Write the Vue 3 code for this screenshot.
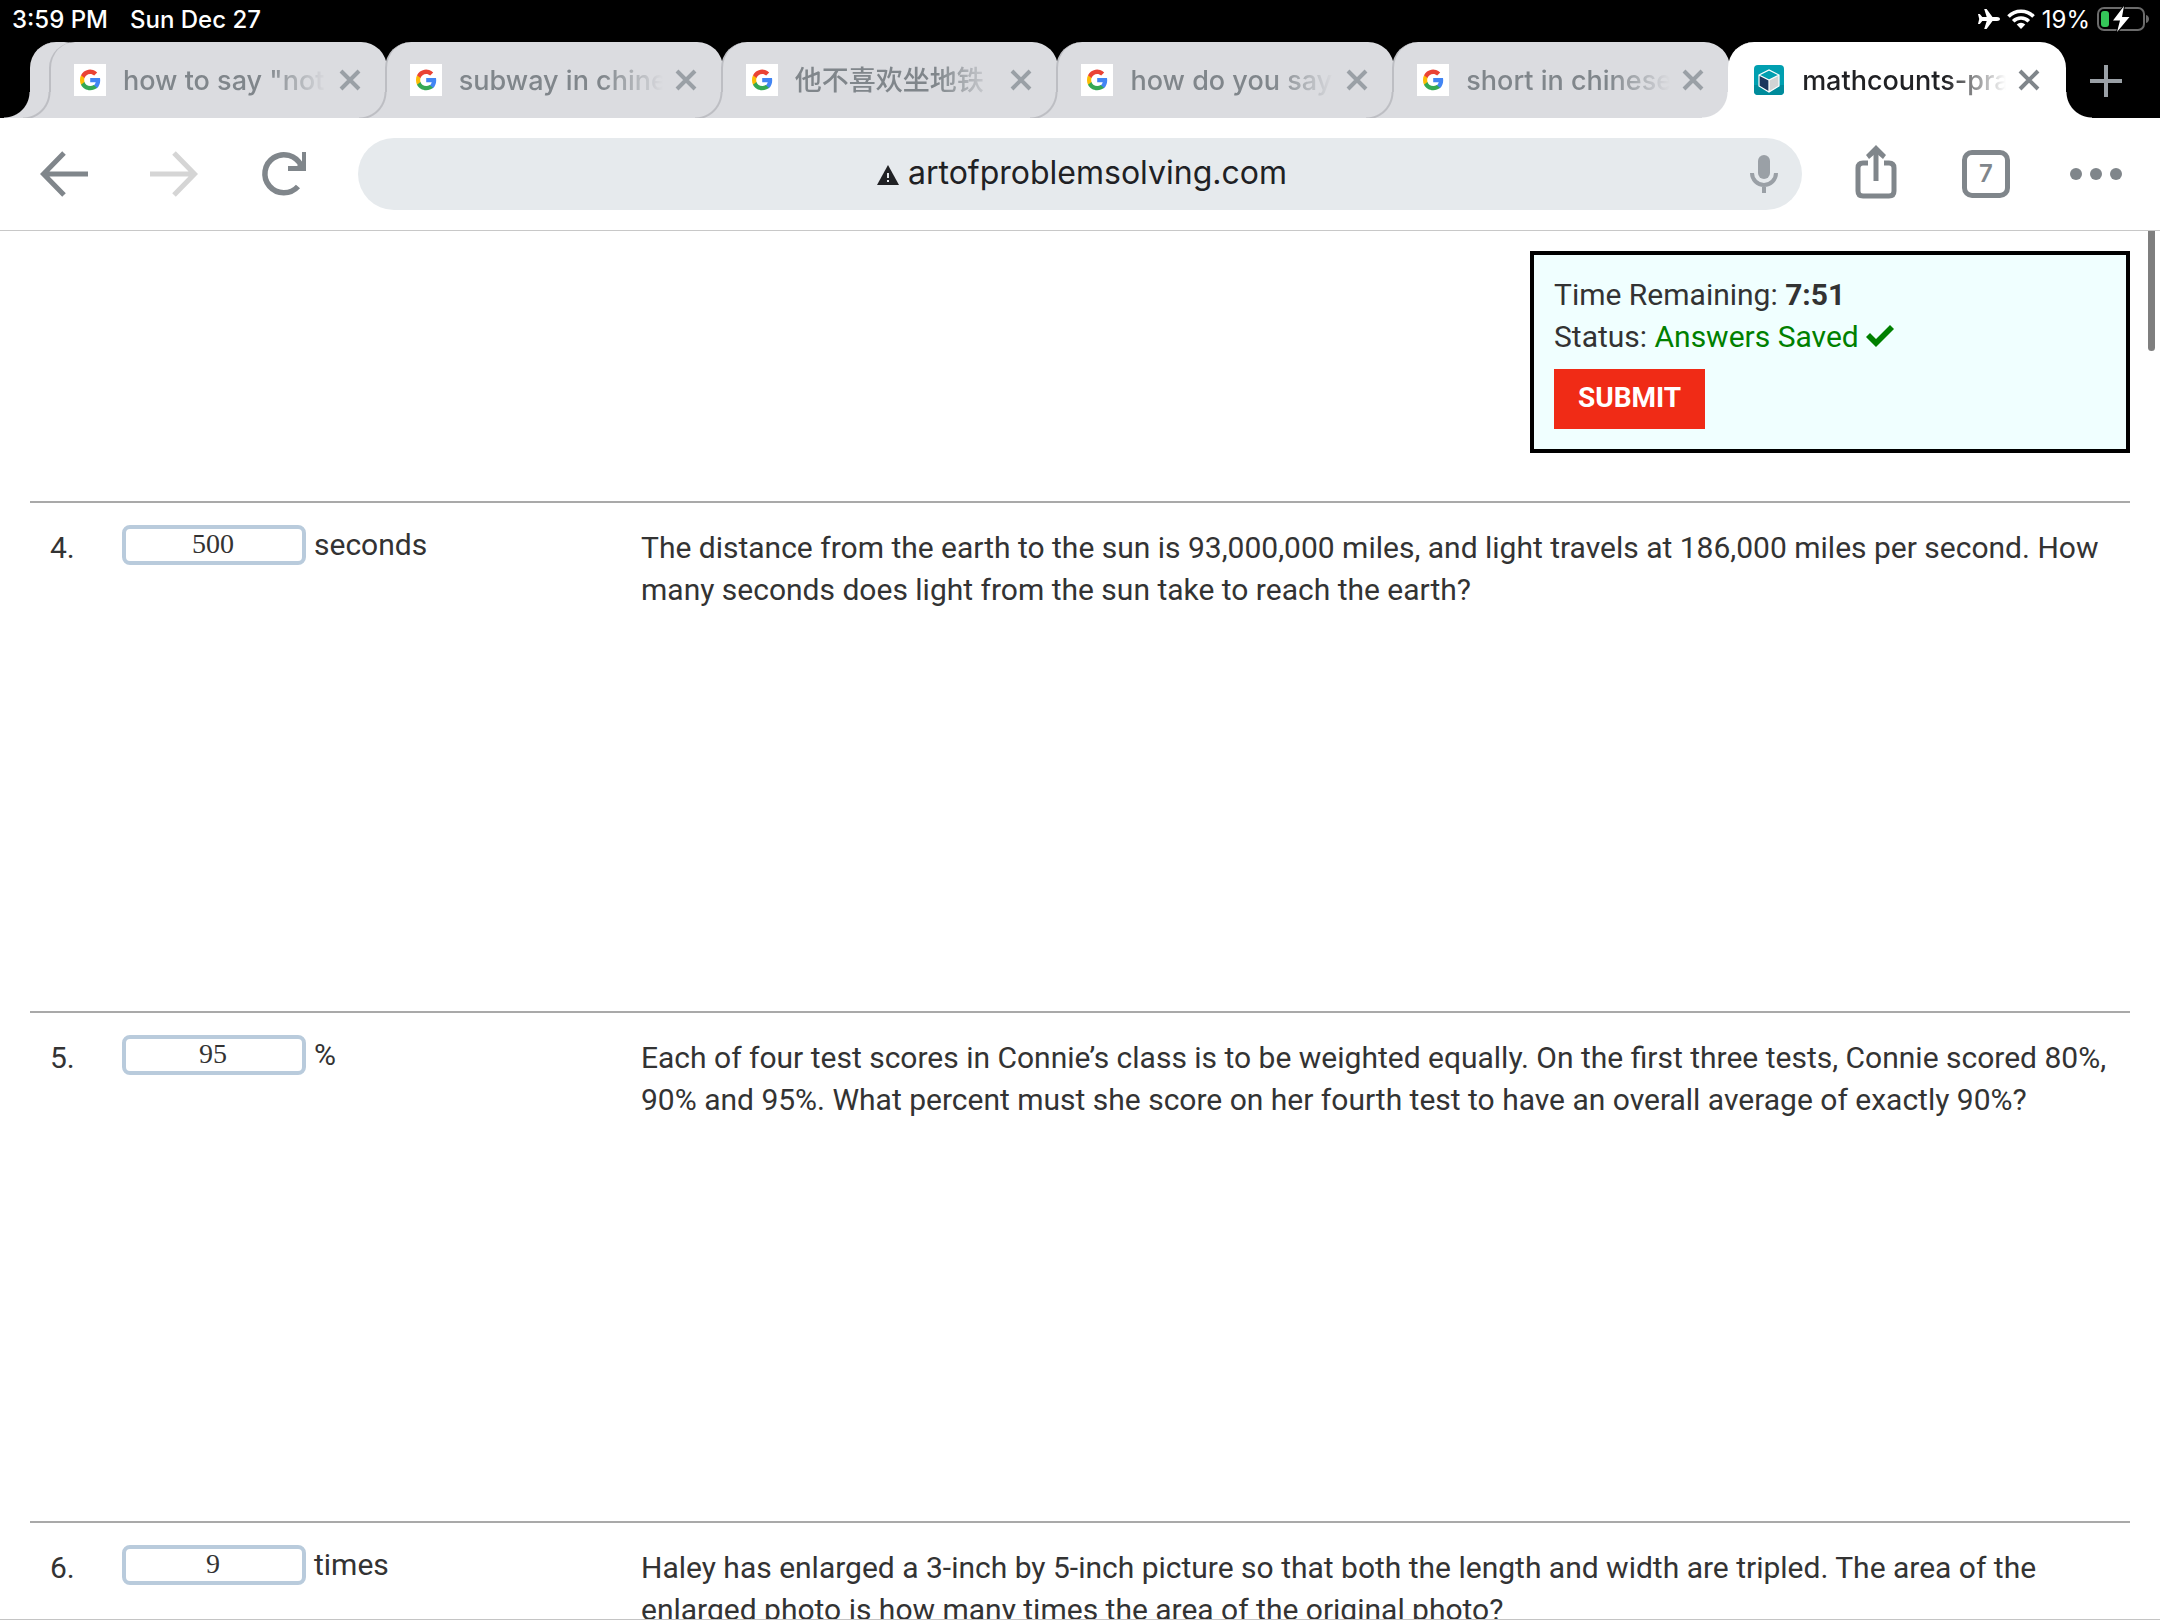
<script setup>
import { ref } from 'vue'

const tabs = [
  { title: 'how to say "not" in chinese', icon: 'google' },
  { title: 'subway in chinese', icon: 'google' },
  { title: '他不喜欢坐地铁', icon: 'google' },
  { title: 'how do you say short', icon: 'google' },
  { title: 'short in chinese', icon: 'google' },
  { title: 'mathcounts-practice', icon: 'aops', active: true },
]

const questions = ref([
  {
    number: 4,
    answer: '500',
    unit: 'seconds',
    text: 'The distance from the earth to the sun is 93,000,000 miles, and light travels at 186,000 miles per second. How many seconds does light from the sun take to reach the earth?',
  },
  {
    number: 5,
    answer: '95',
    unit: '%',
    text: 'Each of four test scores in Connie’s class is to be weighted equally. On the first three tests, Connie scored 80%, 90% and 95%. What percent must she score on her fourth test to have an overall average of exactly 90%?',
  },
  {
    number: 6,
    answer: '9',
    unit: 'times',
    text: 'Haley has enlarged a 3-inch by 5-inch picture so that both the length and width are tripled. The area of the enlarged photo is how many times the area of the original photo?',
  },
])
</script>

<template>
  <div class="screen">
    <header class="status">
      <span>3:59 PM</span>
      <span class="date">Sun Dec 27</span>
      <div class="indicators">
        <svg class="plane" width="22" height="20" viewBox="0 0 22 20">
          <path fill="#fff" d="M22 10c0-1.300-1.200-2-3-2h-4.500L8.600 0H6.200l2.500 8H4.300L1.800 5H0L1.200 10 0 15h1.800l2.500-3h4.400l-2.500 8h2.400l5.900-8H19c1.800 0 3-.7 3-2z" />
        </svg>
        <svg class="wifi" width="28" height="20" viewBox="0 0 28 20">
          <g fill="none" stroke="#fff" stroke-width="3.600">
            <path d="M1.500 7.500a17.500 17.500 0 0 1 25 0" />
            <path d="M6.200 12.200a11 11 0 0 1 15.600 0" />
          </g>
          <path fill="#fff" d="M14 20l-4.300-4.400a6.200 6.200 0 0 1 8.600 0z" />
        </svg>
        <span class="percent">19%</span>
        <svg width="54" height="28" viewBox="0 0 54 28">
          <rect x="1" y="3" width="46" height="22" rx="6" fill="none" stroke="#6b6b6b" stroke-width="2" />
          <path fill="#6b6b6b" d="M49 10c4 1 4 7 0 8z" />
          <rect x="4" y="6" width="8" height="16" rx="3" fill="#34c759" />
          <path fill="#fff" stroke="#000" stroke-width="2" paint-order="stroke" d="M27 1L16 15.500h7L20 27l12.500-15H25z" />
        </svg>
      </div>
    </header>

    <nav class="strip" aria-label="Tabs">
      <div class="stacked"></div>
      <div v-for="tab in tabs" :key="tab.title" class="tab" :class="{ active: tab.active }">
        <svg v-if="tab.icon === 'google'" class="favicon" width="32" height="32" viewBox="0 0 32 32">
          <path fill="#fff" d="M0 0h32v32H0z" />
          <path fill="#4285f4" d="M26 14H16.200v4.200h5.500c-.3 1.400-1 2.500-2.200 3.300v2.800h3.500c2-1.900 3.200-4.600 3.200-8 0-.8-.1-1.500-.2-2.300z" />
          <path fill="#34a853" d="M16.200 26.200c2.800 0 5.100-.9 6.800-2.500l-3.400-2.600c-.9.600-2.100 1-3.400 1-2.700 0-4.900-1.700-5.700-4.100H7v2.700c1.700 3.300 5.200 5.500 9.200 5.500z" />
          <path fill="#fbbc05" d="M10.500 18c-.2-.6-.3-1.300-.3-2s.1-1.400.3-2v-2.700H7C6.300 12.700 6 14.300 6 16s.3 3.300 1 4.700z" />
          <path fill="#ea4335" d="M16.200 9.900c1.500 0 2.900.5 4 1.600l3-3A10.100 10.100 0 0 0 7 11.300l3.500 2.700c.8-2.400 3-4.100 5.700-4.100z" />
        </svg>
        <svg v-else class="favicon" width="32" height="32" viewBox="0 0 32 32">
          <rect x="1" y="1" width="30" height="30" rx="4" fill="#009fb0" />
          <path fill="#008b9b" d="M1 21h30v6a4 4 0 0 1-4 4H5a4 4 0 0 1-4-4z" />
          <path fill="#1b365d" d="M6 11l10 5v12L6 22z" />
          <path fill="#d1d3d4" d="M26 11l-10 5v12l10-6z" />
          <path fill="#009fb0" d="M6 11l10-5 10 5-10 5z" />
          <path fill="none" stroke="#fff" stroke-width="1.200" d="M6 11l10-5 10 5v11l-10 6-10-6zl10 5 10-5M16 16v12" />
        </svg>
        <span class="title">{{ tab.title }}</span>
        <button class="close" type="button" aria-label="Close tab">
          <svg width="22" height="22" viewBox="0 0 22 22">
            <path fill="none" stroke="currentColor" stroke-width="4" d="M2 2l18 18M20 2L2 20" />
          </svg>
        </button>
      </div>
      <button class="new-tab" type="button" aria-label="New tab">
        <svg width="32" height="32" viewBox="0 0 32 32">
          <path stroke="#9aa0a6" stroke-width="4" d="M16 0v32M0 16h32" />
        </svg>
      </button>
    </nav>

    <div class="toolbar">
      <button class="tool" type="button" aria-label="Back">
        <svg width="48" height="48" viewBox="0 0 48 48">
          <path fill="none" stroke="#80868b" stroke-width="5" d="M24 3L3.500 24 24 45M3 24h45" />
        </svg>
      </button>
      <button class="tool" type="button" aria-label="Forward" disabled>
        <svg width="48" height="48" viewBox="0 0 48 48">
          <path fill="none" stroke="#d5d5d5" stroke-width="5" d="M24 3l20.500 21L24 45M45 24H0" />
        </svg>
      </button>
      <button class="tool" type="button" aria-label="Reload">
        <svg width="48" height="48" viewBox="0 0 48 48">
          <path fill="none" stroke="#80868b" stroke-width="5.500" d="M38 36.500A19 19 0 1 1 41 15.500" />
          <path fill="#80868b" d="M46 2v19H28v-5h9l5-5V2z" />
        </svg>
      </button>
      <div class="omnibox">
        <a class="address" href="#">
          <svg width="22" height="20" viewBox="0 0 22 20">
            <path fill="#202124" d="M11 0l11 20H0z" />
            <path fill="#e6eaed" d="M10 8h2v5h-2zM10 15h2v2h-2z" />
          </svg>
          <span>artofproblemsolving.com</span>
        </a>
        <button class="mic" type="button" aria-label="Voice search">
          <svg width="28" height="38" viewBox="0 0 28 38">
            <rect x="8" y="0" width="12" height="24" rx="6" fill="#9aa0a6" />
            <path fill="none" stroke="#9aa0a6" stroke-width="4" d="M2 18a12 12 0 0 0 24 0M14 30v8" />
          </svg>
        </button>
      </div>
      <button class="tool" type="button" aria-label="Share">
        <svg width="44" height="60" viewBox="0 0 44 60">
          <path fill="none" stroke="#80868b" stroke-width="5" d="M14 19H9q-5 0-5 5v23q0 5 5 5h26q5 0 5-5V24q0-5-5-5h-5" />
          <path fill="none" stroke="#80868b" stroke-width="5" d="M22 37V6" />
          <path fill="#80868b" d="M22 1l10 10-3 4-7-6-7 6-3-4z" />
        </svg>
      </button>
      <button class="tool" type="button" aria-label="7 open tabs"><span class="count">7</span></button>
      <button class="tool" type="button" aria-label="More">
        <svg width="52" height="12" viewBox="0 0 52 12" fill="#80868b">
          <circle cx="6" cy="6" r="6" />
          <circle cx="26" cy="6" r="6" />
          <circle cx="46" cy="6" r="6" />
        </svg>
      </button>
    </div>

    <main class="page">
      <div class="scrollbar"></div>
      <form @submit.prevent>
        <section class="timer">
          <div>Time Remaining: <strong>7:51</strong></div>
          <div>
            Status:
            <span class="saved">Answers Saved
              <svg width="28" height="22" viewBox="0 0 28 22">
                <path fill="#008000" d="M0 12l4-4 6 6L24 0l4 4L10 22z" />
              </svg>
            </span>
          </div>
          <button class="submit" type="submit">SUBMIT</button>
        </section>

        <section v-for="q in questions" :key="q.number" class="question">
          <span class="number">{{ q.number }}.</span>
          <div class="answer">
            <input :id="'answer-' + q.number" v-model="q.answer" type="text" />
            <label :for="'answer-' + q.number">{{ q.unit }}</label>
          </div>
          <p>{{ q.text }}</p>
        </section>
      </form>
    </main>
  </div>
</template>

<style>
body {
  margin: 0;
  background: #fff;
}
</style>

<style scoped>
.screen {
  display: flex;
  flex-direction: column;
  height: 100vh;
  overflow: hidden;
  box-sizing: border-box;
  border-bottom: 1px solid #c4c4c4;
  font-family: Inter, "Noto Sans CJK SC", sans-serif;
}

svg {
  display: block;
  flex: none;
}

button {
  display: flex;
  align-items: center;
  justify-content: center;
  padding: 0;
  border: 0;
  background: none;
  color: inherit;
  font: inherit;
}

.status {
  display: flex;
  flex: none;
  align-items: center;
  gap: 22px;
  height: 38px;
  padding: 0 9px 4px 12px;
  background: #000;
  color: #fff;
  font-size: 24px;
  font-weight: 500;
}

.indicators {
  display: flex;
  flex: 1;
  align-items: center;
  justify-content: flex-end;
  gap: 7px;
}

.percent {
  font-weight: 400;
}

.strip {
  display: flex;
  flex: none;
  height: 76px;
  background: #000;
}

.stacked,
.tab {
  --fill: #dbdce0;
  --line: #bdbec3;
  position: relative;
  box-sizing: border-box;
  border-left: 2px solid var(--line);
  border-radius: 26px 26px 0 0;
  background: var(--fill);
}

.stacked {
  flex: none;
  width: 60px;
  margin: 0 -41px 0 30px;
  border-left-color: var(--fill);
}

.tab {
  display: flex;
  flex: 1;
  align-items: center;
  min-width: 0;
  padding: 0 26px 0 23px;
  color: #80868b;
}

.tab + .tab {
  margin-left: -2px;
}

.stacked::before,
.tab::before,
.tab.active::after {
  content: "";
  position: absolute;
  bottom: 0;
  left: -28px;
  width: 28px;
  height: 26px;
  background: radial-gradient(circle at 0 0, transparent 25px, var(--line) 26px, var(--line) 27px, var(--fill) 28px);
}

.stacked::before {
  background: radial-gradient(circle at 0 0, transparent 25px, var(--fill) 26px);
}

.tab.active {
  --fill: #fff;
  --line: #fff;
  color: #202124;
}

.tab.active::after {
  right: -26px;
  left: auto;
  width: 26px;
  background: radial-gradient(circle at 100% 0, transparent 25px, var(--fill) 26px);
}

.title {
  flex: 1;
  min-width: 0;
  margin: 0 12px 0 17px;
  padding-top: 2px;
  overflow: hidden;
  font-size: 27px;
  font-weight: 500;
  line-height: 36px;
  white-space: nowrap;
  mask-image: linear-gradient(to right, #000 70%, transparent);
}

.close {
  flex: none;
  color: #9aa0a6;
}

.active .close {
  color: #80868b;
}

.new-tab {
  flex: none;
  width: 94px;
  padding: 2px 14px 0 0;
}

.toolbar {
  display: flex;
  flex: none;
  align-items: center;
  height: 112px;
  padding: 0 9px;
  border-bottom: 1px solid #c8c8c8;
}

.tool {
  flex: none;
  width: 110px;
  height: 72px;
}

.omnibox {
  position: relative;
  display: flex;
  flex: 1;
  align-items: center;
  justify-content: center;
  height: 72px;
  margin: 0 19px;
  border-radius: 36px;
  background: #e6eaed;
}

.address {
  display: flex;
  align-items: center;
  gap: 9px;
  padding: 0 0 2px 4px;
  color: #202124;
  font-size: 32px;
  line-height: 40px;
  text-decoration: none;
}

.address svg {
  margin-top: 4px;
}

.mic {
  position: absolute;
  right: 24px;
}

.count {
  box-sizing: border-box;
  width: 48px;
  height: 48px;
  border: 5px solid #80868b;
  border-radius: 10px;
  color: #80868b;
  font-size: 24px;
  font-weight: 600;
  line-height: 38px;
}

.page {
  position: relative;
  flex: 1;
  min-height: 0;
  padding: 20px 30px 0;
  overflow: hidden;
  color: #333;
  font-family: Roboto, sans-serif;
  font-size: 30px;
  line-height: 42px;
}

.scrollbar {
  position: absolute;
  top: 0;
  right: 5px;
  width: 7px;
  height: 120px;
  border-radius: 0 0 4px 4px;
  background: #7f7f7f;
}

.timer {
  box-sizing: border-box;
  width: 600px;
  margin: 0 0 48px auto;
  padding: 19px 20px 20px;
  border: 4px solid #000;
  background: #f0ffff;
}

.saved {
  color: #008000;
}

.saved svg {
  display: inline-block;
}

.submit {
  height: 60px;
  margin-top: 11px;
  padding: 0 24px 2px;
  background: #f02b16;
  color: #fff;
  font-size: 28px;
  font-weight: 700;
}

.question {
  display: grid;
  grid-template-columns: 92px 519px 1fr;
  align-items: start;
  box-sizing: border-box;
  height: 510px;
  padding-top: 21px;
  border-top: 2px solid #a9a9a9;
}

.number {
  padding: 3px 0 0 20px;
}

.answer {
  display: flex;
  align-items: center;
  gap: 8px;
}

input {
  box-sizing: border-box;
  width: 184px;
  height: 40px;
  padding: 0 2px 2px 0;
  border: 4px solid #b9cbdc;
  border-radius: 8px;
  background: #fff;
  color: #333;
  font: 28px "Liberation Serif", serif;
  text-align: center;
}

p {
  margin: 0;
  padding-top: 3px;
}
</style>
